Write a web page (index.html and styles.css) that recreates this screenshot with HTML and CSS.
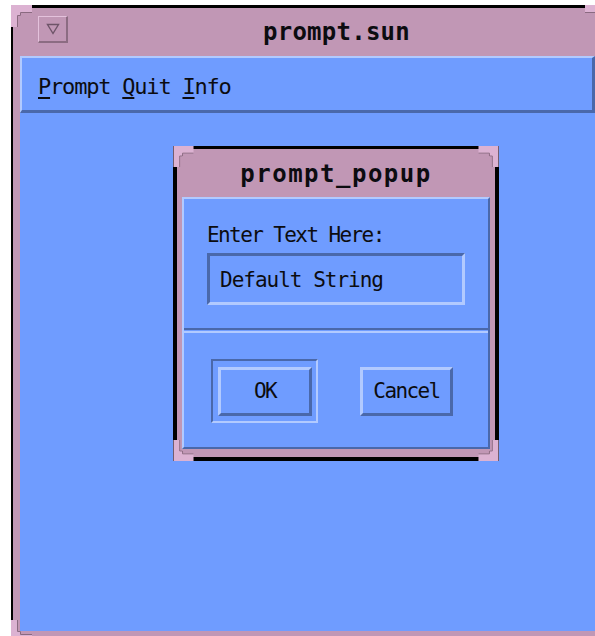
FILE: index.html
```html
<!DOCTYPE html>
<html>
<head>
<meta charset="utf-8">
<title>prompt.sun</title>
<link rel="stylesheet" href="styles.css">
</head>
<body>
  <div class="window">
    <svg class="corner c-tl" width="21" height="22" viewBox="0 0 21 22"><path class="cf" d="M0 0H21V8H10V11H7V22H0Z"/><path class="cl" d="M21 7.5H9.5V10.5H6.5V22"/></svg>
    <svg class="corner c-tr" width="21" height="22" viewBox="0 0 21 22"><path class="cf" d="M0 0H21V8H10V11H7V22H0Z"/><path class="cl" d="M21 7.5H9.5V10.5H6.5V22"/></svg>
    <svg class="corner c-bl" width="21" height="22" viewBox="0 0 21 22"><path class="cf" d="M0 0H21V8H10V11H7V22H0Z"/><path class="cl" d="M21 7.5H9.5V10.5H6.5V22"/></svg>

    <div class="titlebar">
      <span class="winmenu">
        <svg width="14" height="12" viewBox="0 0 14 12"><path d="M1.5 1.5H12.5L7 10.5Z" fill="none" stroke="#6e5468" stroke-width="1.4"/></svg>
      </span>
      <span class="title">prompt.sun</span>
    </div>
    <div class="menubar">
      <span class="item"><u>P</u>rompt</span>
      <span class="item"><u>Q</u>uit</span>
      <span class="item"><u>I</u>nfo</span>
    </div>
    <div class="canvas"></div>
  </div>

  <div class="popup">
    <svg class="corner p-tl" width="21" height="21" viewBox="0 0 21 22"><path class="cf" d="M0 0H21V8H10V11H7V22H0Z"/><path class="cl" d="M21 7.5H9.5V10.5H6.5V22"/></svg>
    <svg class="corner p-tr" width="21" height="21" viewBox="0 0 21 22"><path class="cf" d="M0 0H21V8H10V11H7V22H0Z"/><path class="cl" d="M21 7.5H9.5V10.5H6.5V22"/></svg>
    <svg class="corner p-bl" width="21" height="21" viewBox="0 0 21 22"><path class="cf" d="M0 0H21V8H10V11H7V22H0Z"/><path class="cl" d="M21 7.5H9.5V10.5H6.5V22"/></svg>
    <svg class="corner p-br" width="21" height="21" viewBox="0 0 21 22"><path class="cf" d="M0 0H21V8H10V11H7V22H0Z"/><path class="cl" d="M21 7.5H9.5V10.5H6.5V22"/></svg>

    <div class="popup-title">prompt_popup</div>
    <div class="panel">
      <div class="entry">
        <div class="label">Enter Text Here:</div>
        <div class="field">Default String</div>
      </div>
      <div class="sep"></div>
      <div class="actions">
        <span class="default-ring"><span class="btn btn-ok">OK</span></span>
        <span class="btn btn-cancel">Cancel</span>
      </div>
    </div>
  </div>
</body>
</html>
```

FILE: styles.css
```css
body {
  margin: 0;
  width: 595px;
  height: 636px;
  overflow: hidden;
  background: #ffffff;
  position: relative;
  font-family: "DejaVu Sans Mono", "Liberation Mono", monospace;
  color: #0c0c10;
}

/* main application window */
.window {
  position: relative;
  margin: 5px 0 0 11px;
  width: 595px;
  box-sizing: border-box;
  border-left: 2px solid #000;
  border-right: 4px solid #000;
  border-top: 3px solid #000;
  border-bottom: 4px solid #000;
  background: #c197b5;
  padding: 0 7px 7px;
}

.titlebar {
  height: 48px;
  display: flex;
  align-items: flex-start;
}

.winmenu {
  margin: 8px 0 0 18px;
  width: 30px;
  height: 27px;
  box-sizing: border-box;
  border-top: 1px solid #e4c2dc;
  border-left: 1px solid #e4c2dc;
  border-right: 2px solid #8c6c82;
  border-bottom: 2px solid #8c6c82;
  display: flex;
  align-items: center;
  justify-content: center;
}

.title {
  margin-left: 195px;
  font-weight: bold;
  font-size: 24px;
  letter-spacing: 0.25px;
  line-height: 48px;
  white-space: nowrap;
}

.menubar {
  height: 57px;
  box-sizing: border-box;
  border-top: 2px solid #b2caff;
  border-left: 2px solid #b2caff;
  border-bottom: 3px solid #4a68aa;
  border-right: 3px solid #4a68aa;
  background: #6f9cff;
  padding: 7px 0 0 16px;
  font-size: 22px;
  letter-spacing: -1.2px;
  line-height: 44px;
  display: flex;
  gap: 12px;
}

.menubar u {
  text-decoration-thickness: 2px;
  text-underline-offset: 3px;
}

.canvas {
  height: 518px;
  background: #6f9cff;
}

/* resize corners */
.corner {
  position: absolute;
  display: block;
}
.cf { fill: #dcb2d2; }
.cl { fill: none; stroke: #8a6a80; stroke-width: 1; }

.c-tl { left: -2px; top: -3px; }
.c-tr { right: -4px; top: -3px; transform: scaleX(-1); }
.c-bl { left: -2px; bottom: -4px; transform: scaleY(-1); }

/* popup dialog */
.popup {
  position: absolute;
  left: 173px;
  top: 146px;
  width: 326px;
  height: 315px;
  box-sizing: border-box;
  border-top: 3px solid #000;
  border-left: 4px solid #000;
  border-right: 4px solid #000;
  border-bottom: 4px solid #000;
  background: #c197b5;
  padding: 0 5px 8px;
  display: flex;
  flex-direction: column;
}

.p-tl { left: -4px; top: -3px; }
.p-tr { right: -4px; top: -3px; transform: scaleX(-1); }
.p-bl { left: -4px; bottom: -4px; transform: scaleY(-1); }
.p-br { right: -4px; bottom: -4px; transform: scale(-1, -1); }

.popup-title {
  height: 48px;
  box-sizing: border-box;
  padding-top: 2px;
  text-align: center;
  font-weight: bold;
  font-size: 24px;
  letter-spacing: 1.5px;
  line-height: 46px;
}

.panel {
  height: 252px;
  box-sizing: border-box;
  border-top: 2px solid #b2caff;
  border-left: 2px solid #b2caff;
  border-right: 2px solid #4a68aa;
  border-bottom: 2px solid #4a68aa;
  background: #6f9cff;
  display: flex;
  flex-direction: column;
}

.entry {
  padding: 24px 0 23px 23px;
}

.label {
  font-size: 21px;
  letter-spacing: -1.6px;
  line-height: 24px;
}

.field {
  margin-top: 6px;
  width: 258px;
  height: 52px;
  box-sizing: border-box;
  border-top: 3px solid #4a68aa;
  border-left: 3px solid #4a68aa;
  border-right: 3px solid #b2caff;
  border-bottom: 3px solid #b2caff;
  padding: 2px 0 0 10px;
  font-size: 21px;
  letter-spacing: -1px;
  line-height: 44px;
}

.sep {
  height: 1px;
  border-top: 2px solid #4a68aa;
  border-bottom: 2px solid #b2caff;
}

.actions {
  flex: 1;
  display: flex;
  align-items: flex-start;
  padding: 26px 0 0 27px;
  gap: 42px;
}

.default-ring {
  display: block;
  border-top: 2px solid #4a68aa;
  border-left: 2px solid #4a68aa;
  border-right: 2px solid #b2caff;
  border-bottom: 2px solid #b2caff;
  padding: 6px 4px 5px 5px;
}

.btn {
  display: block;
  height: 49px;
  box-sizing: border-box;
  border-top: 3px solid #b2caff;
  border-left: 3px solid #b2caff;
  border-right: 3px solid #4a68aa;
  border-bottom: 3px solid #4a68aa;
  text-align: center;
  font-size: 21px;
  letter-spacing: -1.6px;
  line-height: 43px;
}

.btn-ok { width: 94px; }

.btn-cancel {
  width: 93px;
  margin-top: 8px;
}
```
